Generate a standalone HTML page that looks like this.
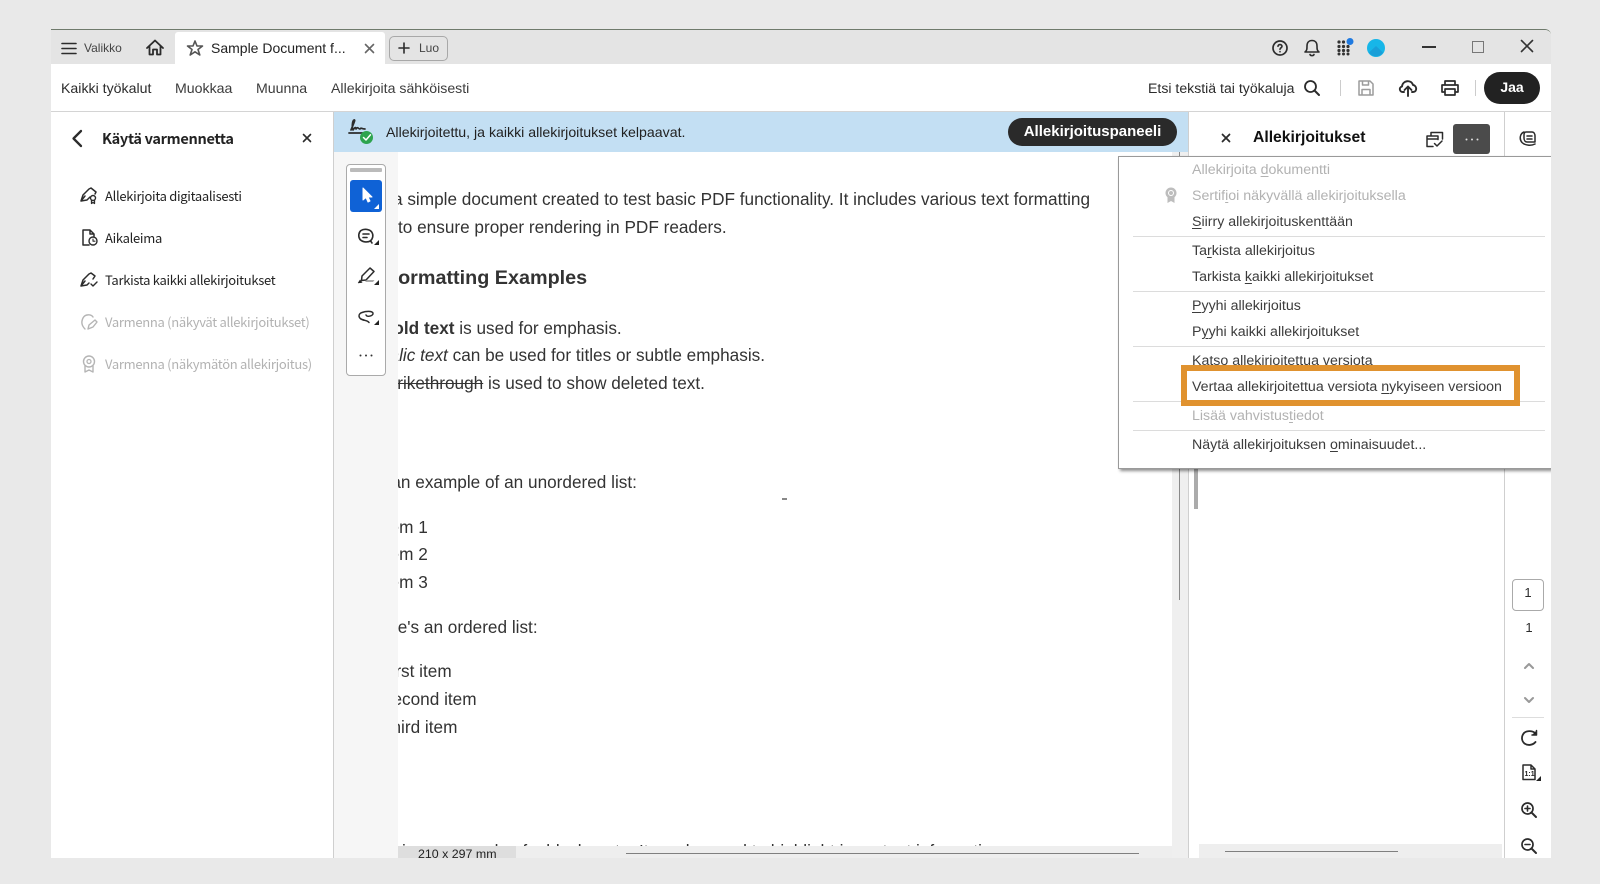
<!DOCTYPE html>
<html lang="fi"><head><meta charset="utf-8"><title>Sample Document</title>
<style>
html,body{margin:0;padding:0;width:1600px;height:884px;overflow:hidden;background:#e9e9e9}
body{position:relative;font-family:"Liberation Sans",Arial,sans-serif;color:#2c2c2c}
.a{position:absolute}
.t{position:absolute;white-space:nowrap;line-height:20px}
svg{position:absolute;overflow:visible;fill:none;stroke:#2c2c2c;stroke-width:1.6;stroke-linecap:round;stroke-linejoin:round}
.s{font-family:"Noto Sans CJK SC","Liberation Sans",sans-serif;font-size:13px;letter-spacing:-.3px;color:#222}
.m{font-size:14.2px;left:73px;color:#3c3c3c}
.t.g{color:#b2b2b2}
.sep{position:absolute;left:14px;width:412px;height:1px;background:#dcdcdc}
.d{font-size:17.2px;color:#333}
u{text-underline-offset:2px}
</style></head><body>
<div class="a" style="left:51px;top:29px;width:1500px;height:829px;background:#fff;overflow:hidden;border-top-right-radius:6px"></div>
<div class="a" style="left:51px;top:29px;width:1500px;height:8px;box-sizing:border-box;border-top:1px solid #6f7a6c;border-radius:0 6px 0 0"></div>
<div class="a" style="left:51px;top:30px;width:1500px;height:34px;background:#e4e4e4;border-top-right-radius:6px"></div>
<div class="a" style="left:175px;top:32px;width:210px;height:32px;background:#fff;border-radius:3px 3px 0 0"></div>

<!-- title bar -->
<svg style="left:62px;top:42px" width="15" height="13"><path d="M0 1.5H14M0 6.5H14M0 11.5H14"/></svg>
<div class="t" style="left:84px;top:38px;font-size:12px;color:#444">Valikko</div>
<svg style="left:146px;top:39px" width="18" height="18"><path d="M1 9 9 1.5 17 9M3.5 7.500V15.500H7V10.500H11V15.500H14.500V7.500" style="stroke-width:1.800"/></svg>
<svg style="left:187px;top:40px" width="16" height="16"><path d="M8 1 10 6H15.500L11 9.500 12.800 15 8 11.800 3.200 15 5 9.500 .5 6H6Z" style="stroke:#555"/></svg>
<div class="t" style="left:211px;top:38px;font-size:14px;color:#222">Sample Document f...</div>
<svg style="left:365px;top:44px" width="9" height="9"><path d="M.5.5 8.500 8.500M8.500.5 .5 8.500" style="stroke:#666"/></svg>
<div class="a" style="left:389px;top:36px;width:57px;height:23px;border:1px solid #a8a8a8;border-radius:5px"></div>
<svg style="left:399px;top:43px" width="10" height="10"><path d="M5 0V10M0 5H10"/></svg>
<div class="t" style="left:419px;top:38px;font-size:12px;color:#444">Luo</div>

<svg style="left:1272px;top:40px" width="16" height="16"><circle cx="8" cy="8" r="7" style="stroke-width:1.700"/><path d="M6 6.300C6 4 10 4 10 6.300 10 7.800 8 7.800 8 9.300M8 11.600V11.800"/></svg>
<svg style="left:1304px;top:39px" width="16" height="18"><path d="M1 13C3 11.500 3 10 3 7 3 3.500 5 1.500 8 1.500S13 3.500 13 7C13 10 13 11.500 15 13ZM6 15.500C6.500 17 9.500 17 10 15.500"/></svg>
<svg style="left:1337px;top:39px" width="18" height="18"><g style="fill:#333;stroke:none"><circle cx="2" cy="3" r="1.600"/><circle cx="6.500" cy="3" r="1.600"/><circle cx="2" cy="7.500" r="1.600"/><circle cx="6.500" cy="7.500" r="1.600"/><circle cx="11" cy="7.500" r="1.600"/><circle cx="2" cy="11.500" r="1.600"/><circle cx="6.500" cy="11.500" r="1.600"/><circle cx="11" cy="11.500" r="1.600"/><circle cx="2" cy="15" r="1.500"/><circle cx="6.500" cy="15" r="1.500"/><circle cx="11" cy="15" r="1.500"/></g><circle cx="13" cy="2.500" r="3.500" style="fill:#1f7ae0;stroke:none"/></svg>
<svg style="left:1367px;top:39px" width="18" height="18"><circle cx="9" cy="9" r="9" style="fill:#17b6e8;stroke:none"/><path d="M2 13.500 9 7 16 13.500C13 18.500 5 18.500 2 13.500Z" style="fill:#1a9fd8;stroke:none"/></svg>
<div class="a" style="left:1422px;top:46px;width:14px;height:2px;background:#333"></div>
<div class="a" style="left:1472px;top:41px;width:10px;height:10px;border:1.500px solid #777"></div>
<svg style="left:1521px;top:40px" width="12" height="12"><path d="M.5.5 11.500 11.500M11.500.5 .5 11.500" style="stroke:#333"/></svg>

<!-- toolbar -->
<div class="t" style="left:61px;top:78px;font-size:14.15px">Kaikki työkalut</div>
<div class="t" style="left:175px;top:78px;font-size:14.15px;color:#3c3c3c">Muokkaa</div>
<div class="t" style="left:256px;top:78px;font-size:14.15px;color:#3c3c3c">Muunna</div>
<div class="t" style="left:331px;top:78px;font-size:14.15px;color:#3c3c3c">Allekirjoita sähköisesti</div>
<div class="t" style="left:1148px;top:78px;font-size:14.1px">Etsi tekstiä tai työkaluja</div>
<svg style="left:1304px;top:80px" width="16" height="16"><circle cx="6.500" cy="6.500" r="5.500" style="stroke-width:1.800"/><path d="M10.500 10.500 15 15" style="stroke-width:2"/></svg>
<div class="a" style="left:1340px;top:80px;width:1px;height:16px;background:#ccc"></div>
<svg style="left:1358px;top:80px" width="16" height="16"><path d="M1 1H12L15 4V15H1ZM4.500 1V5H10.500V1M4 15V9.500H12V15" style="stroke:#9c9c9c;stroke-width:1.500"/></svg>
<svg style="left:1399px;top:79px" width="18" height="18"><path d="M5 13H4C.5 13 -.5 8.500 3 7.500 3.500 1.500 12 0 14 6 18 6.500 18.500 13 14 13H13M9 17V8M5.500 11 9 7.500 12.500 11" style="stroke-width:1.900"/></svg>
<svg style="left:1441px;top:80px" width="18" height="16"><path d="M4 5V1H14V5M4 12H1V5H17V12H14M4 9H14V15H4Z" style="stroke-width:1.700"/></svg>
<div class="a" style="left:1475px;top:80px;width:1px;height:16px;background:#ccc"></div>
<div class="a" style="left:1484px;top:72px;width:56px;height:32px;border-radius:16px;background:#222"></div>
<div class="t" style="left:1484px;top:77px;width:56px;text-align:center;color:#fff;font-size:14px;font-weight:bold">Jaa</div>
<div class="a" style="left:51px;top:111px;width:1500px;height:1px;background:#d4d4d4"></div>

<!-- left sidebar -->
<div class="a" style="left:333px;top:112px;width:1px;height:746px;background:#cfcfcf"></div>
<svg style="left:72px;top:130px" width="10" height="17"><path d="M9 1 1.500 8.500 9 16" style="stroke-width:2.300"/></svg>
<div class="t s" style="left:102px;top:129px;font-size:14.5px;font-weight:bold;color:#222">Käytä varmennetta</div>
<svg style="left:303px;top:134px" width="8" height="8"><path d="M.5.5 7.500 7.500M7.500.5 .5 7.500"/></svg>

<svg style="left:80px;top:187px" width="18" height="17"><path d="M1 14 3 8 9 2 11 1 16 5 15 7M1 14 7 13 10 10M1 14 5 9" style="stroke-width:1.500"/><circle cx="13" cy="11" r="2.500" style="stroke-width:1.400"/><path d="M11.500 13V16.500L13 15.500 14.500 16.500V13" style="stroke-width:1.300"/></svg>
<div class="t s" style="left:105px;top:186px">Allekirjoita digitaalisesti</div>
<svg style="left:82px;top:229px" width="16" height="18"><path d="M7 16H1V1H8L12 5V7M8 1V5H12" style="stroke-width:1.500"/><circle cx="11" cy="12" r="4" style="stroke-width:1.400"/><path d="M11 10V12.200H13" style="stroke-width:1.100"/></svg>
<div class="t s" style="left:105px;top:228px">Aikaleima</div>
<svg style="left:80px;top:271px" width="18" height="17"><path d="M1 15 3 9 9 3 11 2 15 5 13 8M1 15 7 14 9 12M1 15 5 10" style="stroke-width:1.500"/><path d="M11 13 13 15 17 11" style="stroke-width:1.400"/></svg>
<div class="t s" style="left:105px;top:270px">Tarkista kaikki allekirjoitukset</div>
<svg style="left:80px;top:313px" width="18" height="18"><path d="M5 16C2 13 1 9 3 5 5 1 11 1 13 4M15 7 17 9 13 14 8 16 9 12Z" style="stroke:#b5b5b5;stroke-width:1.400"/></svg>
<div class="t s g" style="left:105px;top:312px">Varmenna (näkyvät allekirjoitukset)</div>
<svg style="left:82px;top:355px" width="14" height="18"><circle cx="7" cy="6.500" r="5.500" style="stroke:#b5b5b5;stroke-width:1.400"/><circle cx="7" cy="6.500" r="2" style="stroke:#b5b5b5;stroke-width:1.300"/><path d="M3 11V17L7 15 11 17V11" style="stroke:#b5b5b5;stroke-width:1.400"/></svg>
<div class="t s g" style="left:105px;top:354px">Varmenna (näkymätön allekirjoitus)</div>

<!-- banner -->
<div class="a" style="left:334px;top:112px;width:854px;height:40px;background:#c3dff3"></div>
<svg style="left:348px;top:119px" width="20" height="16"><path d="M1 14H15" style="stroke-width:1.800"/><path d="M3 11C5 6 8 0 6 1 4 2 4 9 5 11 7 8 8 8 8 10 10 7 10 10 12 10 13 8 13 10 17 10" style="stroke-width:1.700"/></svg>
<div class="a" style="left:360px;top:131px;width:13px;height:13px;border-radius:50%;background:#2da44e"></div>
<svg style="left:363px;top:134px" width="8" height="7"><path d="M.5 3.500 3 6 7.500 .8" style="stroke:#fff;stroke-width:1.500"/></svg>
<div class="t" style="left:386px;top:122px;font-size:14.15px;color:#222">Allekirjoitettu, ja kaikki allekirjoitukset kelpaavat.</div>
<div class="a" style="left:1008px;top:118px;width:169px;height:28px;border-radius:14px;background:#2a2a2a"></div>
<div class="t" style="left:1008px;top:122px;width:169px;text-align:center;color:#fff;font-size:15px;font-weight:bold">Allekirjoituspaneeli</div>

<!-- doc area -->
<div class="a" style="left:334px;top:152px;width:64px;height:706px;background:#f6f6f6"></div>
<div class="a" style="left:398px;top:152px;width:774px;height:694px;background:#fff;overflow:hidden">
<div class="t d" style="left:-5px;top:37px">a simple document created to test basic PDF functionality. It includes various text formatting</div>
<div class="t d" style="left:0;top:65px">to ensure proper rendering in PDF readers.</div>
<div class="t" style="left:-12px;top:116px;font-size:19.8px;font-weight:bold;color:#333">Formatting Examples</div>
<div class="t d" style="left:-17px;top:166px"><b>Bold text</b> is used for emphasis.</div>
<div class="t d" style="left:-18px;top:193px"><i>Italic text</i> can be used for titles or subtle emphasis.</div>
<div class="t d" style="left:-17px;top:221px"><s>Strikethrough</s> is used to show deleted text.</div>
<div class="t d" style="left:-20px;top:320px">s an example of an unordered list:</div>
<div class="t d" style="left:-18px;top:365px">Item 1</div>
<div class="t d" style="left:-18px;top:392px">Item 2</div>
<div class="t d" style="left:-18px;top:420px">Item 3</div>
<div class="t d" style="left:-28px;top:465px">Here's an ordered list:</div>
<div class="t d" style="left:-17px;top:509px">First item</div>
<div class="t d" style="left:-17px;top:537px">Second item</div>
<div class="t d" style="left:-17px;top:565px">Third item</div>
<div class="t d" style="left:4px;top:689px">is an example of a blockquote. It can be used to highlight important information.</div>
<div class="a" style="left:384px;top:346px;width:5px;height:2px;background:#888"></div>
</div>
<div class="a" style="left:1172px;top:152px;width:16px;height:706px;background:#efefef"></div>
<div class="a" style="left:1179px;top:152px;width:1px;height:448px;background:#8a8a8a"></div>
<div class="a" style="left:398px;top:846px;width:774px;height:12px;background:#eeeeee"></div>
<div class="a" style="left:398px;top:846px;width:118px;height:12px;background:#dedede"></div>
<div class="t" style="left:418px;top:844px;font-size:12.4px;color:#222;height:14px;overflow:hidden">210 x 297 mm</div>
<div class="a" style="left:626px;top:853px;width:513px;height:1px;background:#808080"></div>

<!-- floating tools -->
<div class="a" style="left:346px;top:164px;width:38px;height:210px;border:1px solid #aaa;border-radius:4px;background:#fff"></div>
<div class="a" style="left:350px;top:168px;width:32px;height:4px;background:#bbb;border-radius:1px"></div>
<div class="a" style="left:350px;top:180px;width:32px;height:32px;background:#0f62d6;border-radius:3px"></div>
<svg style="left:362px;top:187px" width="12" height="17"><path d="M1 1V13L4 10.500 6 15 8 14 6 10H10Z" style="fill:#fff;stroke:#fff;stroke-width:1"/></svg>
<div class="a" style="left:374px;top:204px;width:0;height:0;border-left:5px solid transparent;border-bottom:5px solid #fff"></div>
<svg style="left:358px;top:228px" width="16" height="16"><path d="M14 15 12.500 12.800C15 10.500 15.500 7 14 4.500 12 1 6 .5 3 2.500 .5 4.500 0 8.500 2 11.500 5 14.500 10 14.500 12.500 12.800M5 6H11M5 9.500H9" style="stroke-width:1.600"/></svg>
<div class="a" style="left:374px;top:240px;width:0;height:0;border-left:5px solid transparent;border-bottom:5px solid #222"></div>
<svg style="left:358px;top:267px" width="18" height="18"><path d="M12 1 16 4.500 8 13 3.500 13.500 4 9Z" style="stroke-width:1.500"/><path d="M2 13 0 16 4 15.500Z" style="fill:#222;stroke:#222;stroke-width:.5"/><path d="M7 15H15L16.500 13H9" style="fill:#aaa;stroke:none"/></svg>
<div class="a" style="left:374px;top:280px;width:0;height:0;border-left:5px solid transparent;border-bottom:5px solid #222"></div>
<svg style="left:358px;top:310px" width="16" height="13"><path d="M6 10C0 9 -.5 4 4 2.500 8 1 14 .8 15 3 15.500 6 9 7.500 8 5" style="stroke-width:1.500"/><path d="M5 10C8 10.500 10 11 11 12.500" style="stroke-width:1.500"/></svg>
<div class="a" style="left:374px;top:320px;width:0;height:0;border-left:5px solid transparent;border-bottom:5px solid #222"></div>
<svg style="left:359px;top:354px" width="14" height="3"><g style="fill:#333;stroke:none"><circle cx="1.500" cy="1.500" r="1"/><circle cx="7" cy="1.500" r="1"/><circle cx="12.500" cy="1.500" r="1"/></g></svg>

<!-- right panel -->
<div class="a" style="left:1188px;top:112px;width:1px;height:746px;background:#cfcfcf"></div>
<div class="a" style="left:1504px;top:112px;width:1px;height:746px;background:#cfcfcf"></div>
<svg style="left:1222px;top:134px" width="8" height="8"><path d="M.5.5 7.500 7.500M7.500.5 .5 7.500" style="stroke-width:1.800"/></svg>
<div class="t" style="left:1253px;top:128px;font-size:15.7px;font-weight:bold;color:#111">Allekirjoitukset</div>
<svg style="left:1426px;top:131px" width="18" height="17"><path d="M5 4.500V1.500H16.500V8M1 5H12V8.500M1 5V15.500H7M1 8H12M8.500 12.500 11 15 16 10" style="stroke-width:1.500"/></svg>
<div class="a" style="left:1453px;top:124px;width:37px;height:30px;background:#4b4b4b;border-radius:3px"></div>
<svg style="left:1465px;top:138px" width="14" height="3"><g style="fill:#ddd;stroke:none"><circle cx="1.500" cy="1.500" r="1"/><circle cx="7" cy="1.500" r="1"/><circle cx="12.500" cy="1.500" r="1"/></g></svg>
<svg style="left:1519px;top:129px" width="18" height="18"><path d="M5 3C1 4.500 0 10 3 13.500 6 16.500 12 17 16 15M7 3H13C15 3 16 5 16 7V13H8C6 13 5 11 5 9V6C5 4 6 3 7 3ZM8 7H13M8 10H13" style="stroke-width:1.500"/></svg>
<div class="a" style="left:1194px;top:469px;width:4px;height:40px;background:#ababab"></div>
<div class="a" style="left:1199px;top:844px;width:303px;height:14px;background:#eeeeee"></div>
<div class="a" style="left:1225px;top:851px;width:173px;height:1px;background:#808080"></div>

<!-- right rail -->
<div class="a" style="left:1512px;top:579px;width:30px;height:30px;border:1px solid #aaa;border-radius:4px"></div>
<div class="t" style="left:1512px;top:583px;width:32px;text-align:center;font-size:13px">1</div>
<div class="t" style="left:1513px;top:618px;width:32px;text-align:center;font-size:13px">1</div>
<svg style="left:1524px;top:663px" width="10" height="6"><path d="M1 5 5 1 9 5" style="stroke:#999;stroke-width:2"/></svg>
<svg style="left:1524px;top:697px" width="10" height="6"><path d="M1 1 5 5 9 1" style="stroke:#999;stroke-width:2"/></svg>
<div class="a" style="left:1512px;top:717px;width:32px;height:1px;background:#ddd"></div>
<svg style="left:1521px;top:730px" width="16" height="16"><path d="M14 3C11 .5 6 .5 3 3 0 6.500 .5 11 3.500 13.500 7 16 12 15 14.500 12" style="stroke-width:1.800"/><path d="M15.500 .5V5H11" style="stroke-width:1.500;fill:#222"/></svg>
<svg style="left:1522px;top:764px" width="14" height="17"><path d="M1 1H9L13 5V15.500H1ZM9 1V5H13" style="stroke-width:1.500"/><text x="2.500" y="12" style="font:bold 7px 'Liberation Sans',sans-serif;fill:#222;stroke:none">1:1</text></svg>
<div class="a" style="left:1536px;top:776px;width:0;height:0;border-left:5px solid transparent;border-bottom:5px solid #222"></div>
<svg style="left:1521px;top:802px" width="16" height="16"><circle cx="6.500" cy="6.500" r="5.500" style="stroke-width:1.700"/><path d="M10.500 10.500 15 15" style="stroke-width:2"/><path d="M6.500 4V9M4 6.500H9"/></svg>
<svg style="left:1521px;top:838px" width="16" height="16"><circle cx="6.500" cy="6.500" r="5.500" style="stroke-width:1.700"/><path d="M10.500 10.500 15 15" style="stroke-width:2"/><path d="M4 6.500H9"/></svg>

<!-- menu -->
<div class="a" style="left:1118px;top:156px;width:433px;height:313px;background:#fff;border:1px solid #9a9a9a;border-right:0;box-shadow:2px 2px 3px rgba(0,0,0,.45);box-sizing:border-box;clip-path:inset(-1px 0 -6px -1px)">
<div class="t m g" style="top:3px">Allekirjoita <u>d</u>okumentti</div>
<svg style="left:46px;top:30px" width="12" height="17"><circle cx="6" cy="6" r="5.500" style="fill:#bdbdbd;stroke:none"/><circle cx="6" cy="6" r="2.500" style="stroke:#fff;stroke-width:1"/><path d="M2.500 10V16L6 14 9.500 16V10Z" style="fill:#bdbdbd;stroke:none"/></svg>
<div class="t m g" style="top:29px">Sertif<u>i</u>oi näkyvällä allekirjoituksella</div>
<div class="t m" style="top:55px"><u>S</u>iirry allekirjoituskenttään</div>
<div class="sep" style="top:79px"></div>
<div class="t m" style="top:84px">Ta<u>r</u>kista allekirjoitus</div>
<div class="t m" style="top:110px">Tarkista <u>k</u>aikki allekirjoitukset</div>
<div class="sep" style="top:134px"></div>
<div class="t m" style="top:139px"><u>P</u>yyhi allekirjoitus</div>
<div class="t m" style="top:165px">P<u>y</u>yhi kaikki allekirjoitukset</div>
<div class="sep" style="top:189px"></div>
<div class="t m" style="top:194px">Katso allekirjoitettua versiota</div>
<div class="t m" style="top:220px">Vertaa allekirjoitettua versiota <u>n</u>ykyiseen versioon</div>
<div class="sep" style="top:244px"></div>
<div class="t m g" style="top:249px">Lisää vahvistus<u>t</u>iedot</div>
<div class="sep" style="top:273px"></div>
<div class="t m" style="top:278px">Näytä allekirjoituksen <u>o</u>minaisuudet...</div>
<div class="a" style="left:62px;top:208px;width:339px;height:41px;border:6px solid #e0922f;box-sizing:border-box"></div>
</div>
</body></html>
